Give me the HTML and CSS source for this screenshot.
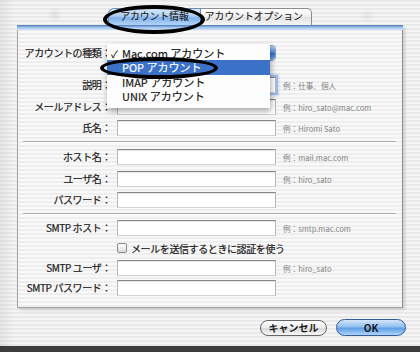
FILE: index.html
```html
<!DOCTYPE html>
<html lang="ja">
<head>
<meta charset="utf-8">
<title>アカウント情報</title>
<link rel="stylesheet" href="styles.css">
</head>
<body>
<div class="window">
  <div class="tabs">
    <div class="tab tab-on">アカウント情報</div>
    <div class="tab tab-off">アカウントオプション</div>
  </div>

  <div class="panel">
    <div class="tab-rule"></div>

    <div class="row row-kind">
      <span class="label">アカウントの種類：</span>
      <div class="popup"><span class="popup-arrows"></span></div>
      <ul class="menu">
        <li><span class="check">✓</span>Mac.com アカウント</li>
        <li class="hl"><span class="check"></span>POP アカウント</li>
        <li><span class="check"></span>IMAP アカウント</li>
        <li><span class="check"></span>UNIX アカウント</li>
      </ul>
    </div>

    <div class="row mt16">
      <span class="label">説明：</span>
      <div class="field focused"></div>
      <span class="ex">例：仕事、個人</span>
    </div>
    <div class="row mt6">
      <span class="label">メールアドレス：</span>
      <div class="field"></div>
      <span class="ex">例：hiro_sato@mac.com</span>
    </div>
    <div class="row mt5">
      <span class="label">氏名：</span>
      <div class="field"></div>
      <span class="ex">例：Hiromi Sato</span>
    </div>

    <div class="sep"></div>

    <div class="row mt6">
      <span class="label">ホスト名：</span>
      <div class="field"></div>
      <span class="ex">例：mail.mac.com</span>
    </div>
    <div class="row mt6">
      <span class="label">ユーザ名：</span>
      <div class="field"></div>
      <span class="ex">例：hiro_sato</span>
    </div>
    <div class="row mt5">
      <span class="label">パスワード：</span>
      <div class="field"></div>
    </div>

    <div class="sep sep-b"></div>

    <div class="row mt5">
      <span class="label">SMTP ホスト：</span>
      <div class="field"></div>
      <span class="ex">例：smtp.mac.com</span>
    </div>
    <div class="row mt4">
      <span class="label"></span>
      <label class="checkrow"><span class="checkbox"></span>メールを送信するときに認証を使う</label>
    </div>
    <div class="row mt4">
      <span class="label">SMTP ユーザ：</span>
      <div class="field"></div>
      <span class="ex">例：hiro_sato</span>
    </div>
    <div class="row mt4">
      <span class="label">SMTP パスワード：</span>
      <div class="field"></div>
    </div>
  </div>

  <div class="buttons">
    <button class="btn btn-cancel">キャンセル</button>
    <button class="btn btn-ok">OK</button>
  </div>
  <div class="bottom-bar"></div>
</div>

<!-- hand drawn annotation rings -->
<div class="mark mark-tab"></div>
<div class="mark mark-pop"></div>
</body>
</html>
```

FILE: styles.css
```css
html, body {
  margin: 0;
  padding: 0;
}

body {
  width: 420px;
  height: 352px;
  overflow: hidden;
  font-family: "Noto Sans CJK JP", "Noto Sans", sans-serif;
  color: #222;
}

.window {
  position: relative;
  width: 420px;
  height: 352px;
  display: flex;
  flex-direction: column;
  background:
    radial-gradient(7px 8px at 55px 15px, rgba(0,0,0,0.07), transparent),
    radial-gradient(8px 7px at 367px 16px, rgba(0,0,0,0.06), transparent),
    linear-gradient(to right, rgba(0,0,0,0.06), transparent 14px),
    repeating-linear-gradient(to bottom, #e9e9e9 0 2px, #f5f5f5 2px 4px);
}

/* tabs */
.tabs {
  display: flex;
  justify-content: center;
  padding-top: 8px;
  height: 17px;
}

.tab {
  box-sizing: border-box;
  height: 17px;
  line-height: 15px;
  font-size: 9.8px;
  -webkit-text-stroke: 0.15px #222;
  border: 1px solid #8d8d8d;
  border-bottom: none;
  white-space: nowrap;
}

.tab-on {
  padding: 0 11px;
  border-color: #6b8cb8;
  border-radius: 6px 0 0 0;
  background: linear-gradient(#d9e9fa 0%, #a9cdf2 45%, #7eb1ea 55%, #b2d5f8 100%);
}

.tab-off {
  padding: 0 8px 0 4px;
  border-left: none;
  border-radius: 0 5px 0 0;
  background: linear-gradient(#ffffff 0%, #eeeeee 50%, #e2e2e2 51%, #f5f5f5 100%);
}

/* tab panel */
.panel {
  position: relative;
  margin-left: 17px;
  width: 386px;
  box-sizing: border-box;
  border: 1px solid #a4a4a4;
  border-top: none;
  border-right-color: #8e8e8e;
  padding-bottom: 11px;
  background: repeating-linear-gradient(to bottom, #eeeeee 0 2px, #f9f9f9 2px 4px);
  box-shadow: 2px 2px 3px rgba(0,0,0,0.15);
  display: flex;
  flex-direction: column;
}

.tab-rule {
  height: 5px;
  margin: 0 -1px;
  background: linear-gradient(#5d88c4 0, #5d88c4 1px, #9dc1ec 2px, #b9d5f4 4px, #d3e4f7 5px);
}

.row {
  display: grid;
  grid-template-columns: 93px 159px auto;
  column-gap: 6px;
  align-items: center;
  height: 16px;
}

.row-kind {
  position: relative;
  margin-top: 15px;
}

.mt4 { margin-top: 4px; }
.mt5 { margin-top: 5px; }
.mt6 { margin-top: 6px; }
.mt16 { margin-top: 16px; }

.label {
  text-align: right;
  white-space: nowrap;
  font-size: 10px;
  letter-spacing: -0.4px;
  line-height: 16px;
  color: #1a1a1a;
  -webkit-text-stroke: 0.2px #1a1a1a;
}

.field {
  box-sizing: border-box;
  height: 16px;
  background: #fff;
  border: 1px solid;
  border-color: #858585 #b8b8b8 #d2d2d2 #b8b8b8;
  box-shadow: inset 0 1px 1px rgba(0,0,0,0.1);
}

.field.focused {
  box-shadow: 0 0 0 2px #9dbde8, 0 0 2px 3px rgba(110,150,215,0.35);
}

.ex {
  margin-left: 1px;
  font-size: 7.6px;
  color: #858585;
  white-space: nowrap;
}

/* popup button and its open menu */
.popup {
  box-sizing: border-box;
  height: 16px;
  display: flex;
  justify-content: flex-end;
  background: #fff;
  border: 1px solid #9a9a9a;
  border-radius: 4px;
}

.popup-arrows {
  width: 9px;
  border-radius: 0 4px 4px 0;
  background: linear-gradient(#a6cbf4, #4f8de0 50%, #2d6fd0 51%, #6fb0f2);
}

.menu {
  position: absolute;
  left: 89px;
  top: -1px;
  width: 163px;
  margin: 0;
  padding: 2px 0 5px;
  list-style: none;
  background: rgba(253,253,253,0.98);
  box-shadow: 1px 3px 6px rgba(0,0,0,0.35);
  z-index: 5;
}

.menu li {
  height: 14px;
  line-height: 14px;
  padding-left: 4px;
  font-size: 11px;
  color: #111;
  -webkit-text-stroke: 0.15px #111;
  white-space: nowrap;
}

.menu li.hl {
  height: 15px;
  line-height: 15px;
  background: #3b72c8;
  color: #fff;
  -webkit-text-stroke: 0.15px #fff;
}

.check {
  display: inline-block;
  width: 11px;
  font-size: 10px;
}

/* separators */
.sep {
  margin: 5px 6px 0 5px;
  height: 1px;
  background: #a9a9a9;
  border-bottom: 1px solid #ffffff;
}

.sep + .row {
  margin-top: 6px;
}

.sep-b + .row {
  margin-top: 5px;
}

/* checkbox */
.checkrow {
  grid-column: 2 / 4;
  display: flex;
  align-items: center;
  gap: 4px;
  font-size: 10px;
  letter-spacing: -0.4px;
  white-space: nowrap;
  -webkit-text-stroke: 0.2px #1a1a1a;
}

.checkbox {
  box-sizing: border-box;
  width: 10px;
  height: 10px;
  border: 1px solid #8a8a8a;
  border-radius: 2px;
  background: linear-gradient(#ffffff, #dcdcdc);
}

/* buttons */
.buttons {
  display: flex;
  justify-content: flex-end;
  align-items: center;
  gap: 9px;
  height: 38px;
  padding: 1px 14px 0 0;
  box-sizing: border-box;
}

.btn {
  box-sizing: border-box;
  font-family: inherit;
  font-size: 10px;
  font-weight: bold;
  color: #1a1a1a;
  padding: 0;
  border-radius: 9px;
  line-height: 14px;
}

.btn-cancel {
  width: 67px;
  height: 16px;
  border: 1px solid #666;
  background: linear-gradient(#ffffff 0%, #ececec 48%, #dadada 52%, #f6f6f6 100%);
}

.btn-ok {
  width: 70px;
  height: 17px;
  border: 1px solid #335b95;
  background: linear-gradient(#d3e6fb 0%, #93c0f1 45%, #5f9ee7 55%, #acd4fb 100%);
}

.bottom-bar {
  height: 6px;
  background: #3c3c3c;
}

/* annotation rings */
.mark {
  position: absolute;
  box-sizing: border-box;
  border: 4px solid #000;
  border-radius: 50%;
  z-index: 10;
}

.mark-tab {
  left: 103px;
  top: 5px;
  width: 102px;
  height: 29px;
}

.mark-pop {
  left: 100px;
  top: 57px;
  width: 118px;
  height: 22px;
}
```
